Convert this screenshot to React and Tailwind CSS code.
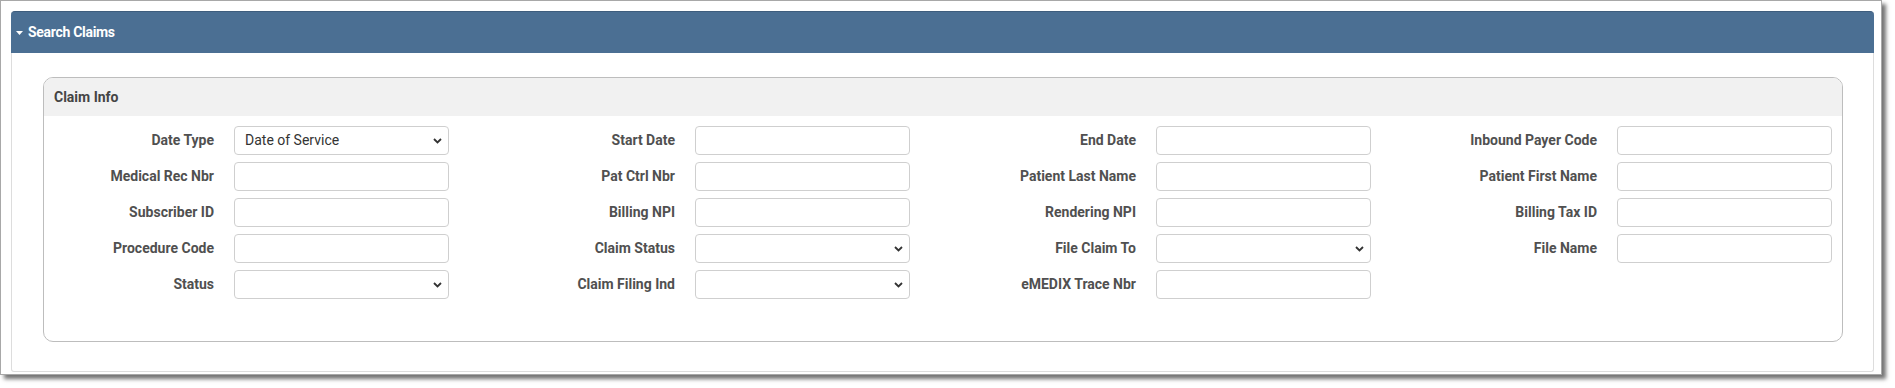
const fields = [
  [
    { label: 'Date Type', type: 'select', value: 'Date of Service' },
    { label: 'Start Date' },
    { label: 'End Date' },
    { label: 'Inbound Payer Code' },
  ],
  [
    { label: 'Medical Rec Nbr' },
    { label: 'Pat Ctrl Nbr' },
    { label: 'Patient Last Name' },
    { label: 'Patient First Name' },
  ],
  [
    { label: 'Subscriber ID' },
    { label: 'Billing NPI' },
    { label: 'Rendering NPI' },
    { label: 'Billing Tax ID' },
  ],
  [
    { label: 'Procedure Code' },
    { label: 'Claim Status', type: 'select' },
    { label: 'File Claim To', type: 'select' },
    { label: 'File Name' },
  ],
  [
    { label: 'Status', type: 'select' },
    { label: 'Claim Filing Ind', type: 'select' },
    { label: 'eMEDIX Trace Nbr' },
    null,
  ],
]

const Chevron = () => (
  <svg width="9" height="6" viewBox="0 0 9 6" className="absolute right-[7px] top-[12px] pointer-events-none">
    <path d="M1 1l3.5 3.5L8 1" fill="none" stroke="#333" strokeWidth="1.8" />
  </svg>
)

const Field = ({ field }) => {
  if (field.type === 'select') {
    return (
      <div className="relative w-[215px] h-[29px]">
        <select
          defaultValue={field.value || ''}
          className="appearance-none w-full h-full border border-[#cfcfcf] rounded-[4px] bg-white pl-[10px] text-[14px] text-[#333] outline-none"
        >
          {field.value ? <option>{field.value}</option> : <option value=""></option>}
        </select>
        <Chevron />
      </div>
    )
  }
  return (
    <input
      type="text"
      className="w-[215px] h-[29px] border border-[#cfcfcf] rounded-[4px] bg-white px-[10px] text-[14px] text-[#333] outline-none"
    />
  )
}

const App = () => {
  return (
    <div className="bg-white w-[1895px] h-[388px] font-['Roboto',sans-serif]">
      {/* Frame */}
      <div className="w-[1882px] h-[375px] border border-[#a8a8a8] bg-white pl-[10px] pt-[10px] shadow-[4px_4px_4px_rgba(0,0,0,0.55)]">
        {/* Search Claims panel */}
        <div className="w-[1863px] h-[361px] flex flex-col">
          <div className="h-[42px] bg-[#4b6f93] border-t border-[#3e5d7d] rounded-t-[4px] flex items-center pl-[5px] text-white">
            <svg width="7" height="4" viewBox="0 0 7 4" className="mr-[5px]">
              <path d="M0 0h7L3.5 4z" fill="#fff" />
            </svg>
            <span className="text-[14px] font-bold tracking-[-0.3px]">Search Claims</span>
          </div>
          <div className="flex-1 border-x border-b border-[#dddddd] rounded-b-[3px] pl-[31px] pt-[24px]">
            {/* Claim Info fieldset */}
            <div className="w-[1800px] h-[265px] border border-[#bdbdbd] rounded-[10px] overflow-hidden">
              <div className="h-[38px] bg-[#f1f1f1] flex items-center pl-[10px]">
                <span className="text-[14px] font-bold text-[#444]">Claim Info</span>
              </div>
              <div className="grid grid-cols-[150px_215px_206px_215px_206px_215px_206px_215px] gap-x-[20px] gap-y-[7px] pl-[20px] pt-[10px]">
                {fields.map((row, r) =>
                  row.map((field, c) =>
                    field ? (
                      [
                        <label
                          key={`l-${r}-${c}`}
                          className="h-[29px] flex items-center justify-end text-[14px] font-bold text-[#505050] whitespace-nowrap"
                        >
                          {field.label}
                        </label>,
                        <Field key={`f-${r}-${c}`} field={field} />,
                      ]
                    ) : (
                      [<div key={`l-${r}-${c}`} />, <div key={`f-${r}-${c}`} />]
                    )
                  )
                )}
              </div>
            </div>
          </div>
        </div>
      </div>
    </div>
  )
}

export default App
